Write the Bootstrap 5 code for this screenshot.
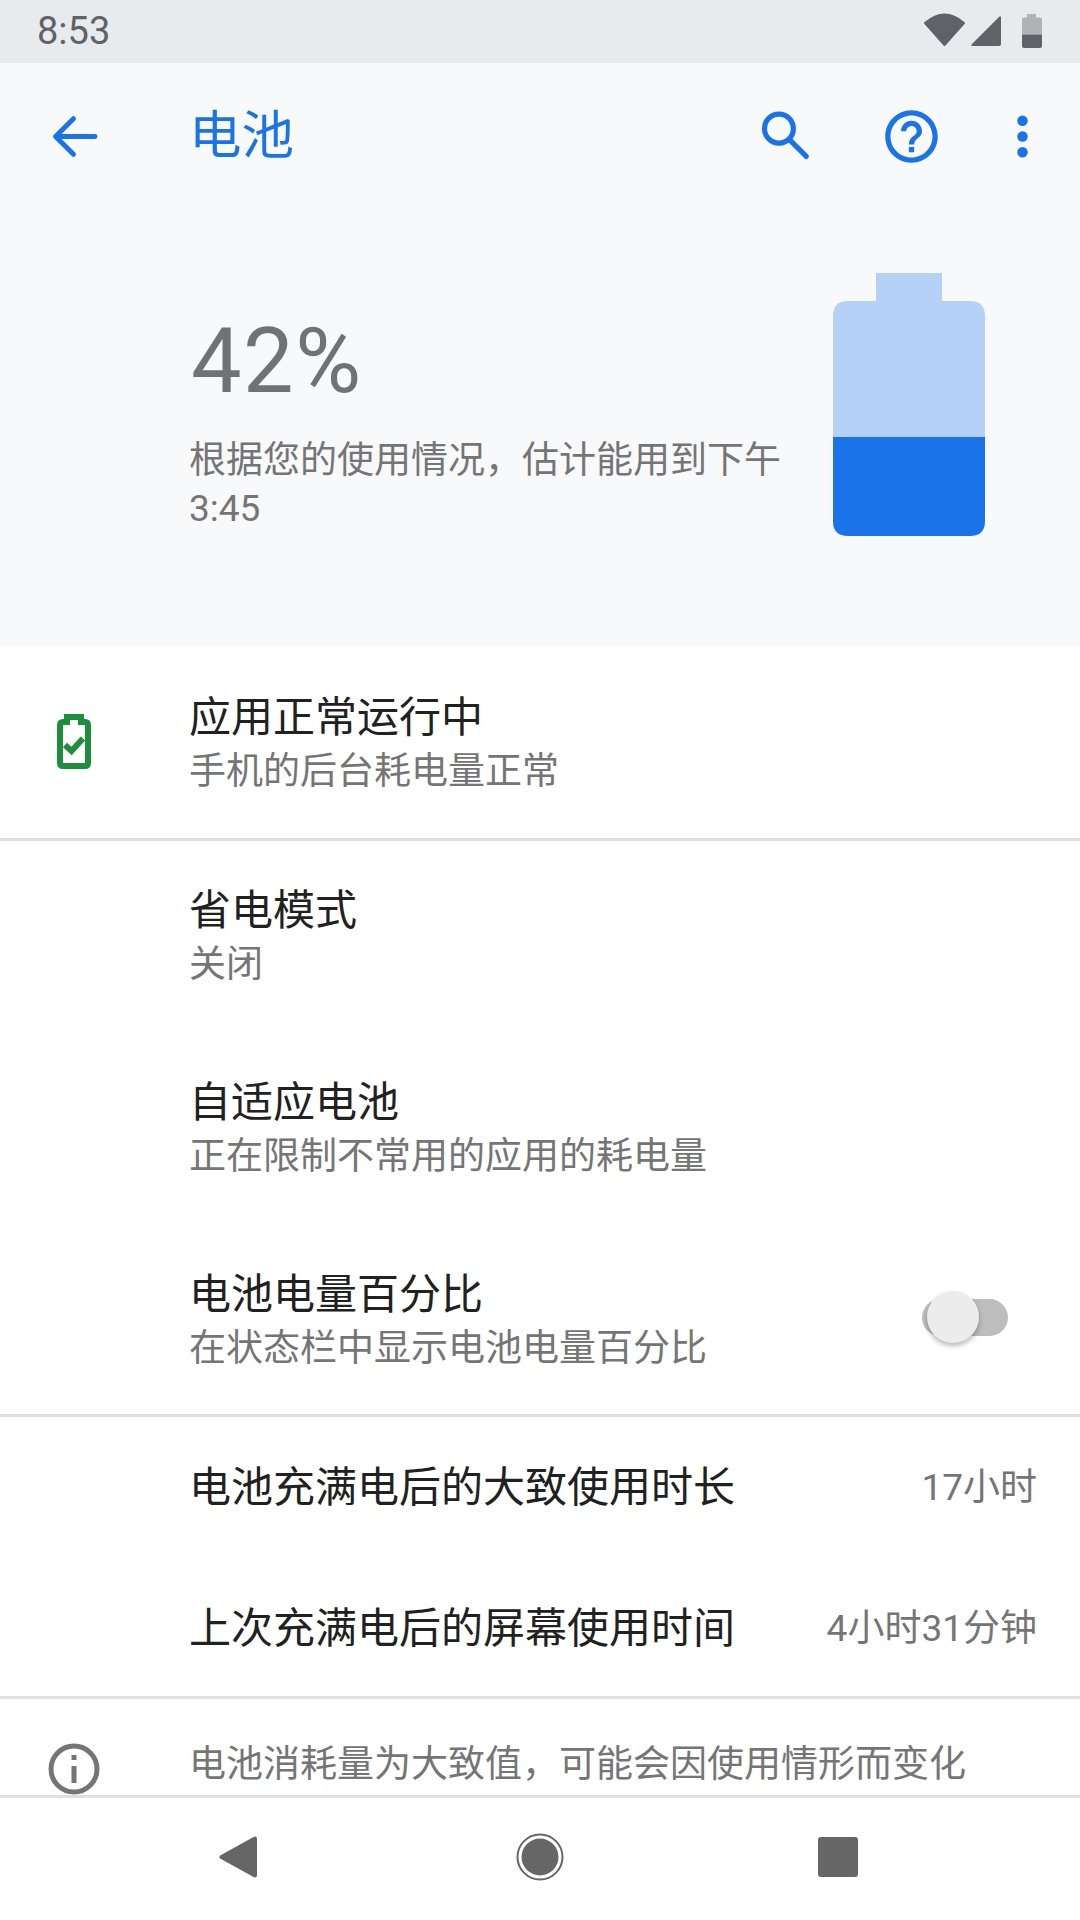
<!DOCTYPE html>
<html lang="zh-CN">
<head>
  <meta charset="UTF-8" />
  <title>电池</title>
  <meta name="viewport" content="width=device-width, initial-scale=1" />
  <link href="https://cdn.jsdelivr.net/npm/bootstrap@5.3.3/dist/css/bootstrap.min.css" rel="stylesheet" />
  <style>
    body { font-family: Roboto, "Noto Sans CJK SC", sans-serif; background: #fff; color: #212121; }
    .phone { width: 1080px; height: 1920px; }
    .status-strip { height: 63px; background: #e8eaed; color: #5f6368; font-size: 38px; padding: 0 38px 0 37px; }
    .status-strip svg { display: block; }
    .status-icons { align-self: flex-start; padding-top: 12px; }
    .top-area { background: #f8f9fa; height: 583px; }
    .app-toolbar { height: 147px; color: #1a73e8; }
    .back-slot { width: 189px; padding-left: 43px; }
    .page-title { font-size: 52.5px; line-height: 1; }
    .action-slot { width: 126px; }
    .action-end { width: 106px; padding-right: 10px; }
    .hero { padding: 0 95px 0 189px; height: 436px; }
    .hero-text { width: 600px; margin-top: 107px; }
    .hero-num { font-size: 90px; line-height: 1; letter-spacing: 1.5px; padding-left: 2px; color: #707275; margin-bottom: 30px; }
    .hero-desc { font-size: 37px; line-height: 48px; color: #757575; }
    .hero-batt { margin-top: 63px; }
    .setting-row { height: 192px; }
    .setting-row.end-row { height: 189px; padding-top: 3px; }
    .setting-row.short { height: 141px; }
    .setting-row.short-end { height: 138px; padding-top: 3px; }
    .row-copy { padding-top: 2px; }
    .first-row .row-copy { padding-top: 6px; }
    .icon-slot { width: 189px; padding-left: 57px; }
    .row-main { font-size: 42px; line-height: 54px; color: #212121; }
    .row-sub { font-size: 37px; line-height: 54px; color: #757575; }
    .row-val { font-size: 37px; color: #757575; padding-right: 43px; }
    .sep { height: 3px; background: #e0e0e0; }
    .list-area { min-height: 0; overflow: hidden; }
    .info-row { padding-top: 42px; color: #757575; font-size: 37px; line-height: 48px; }
    .info-icon { width: 189px; padding-left: 46px; }
    .switch-box { width: 86px; height: 37px; margin: 0 72px 7px 0; }
    .switch-track { height: 37px; background: #bdbdbd; border-radius: 19px; }
    .switch-knob { position: absolute; left: 5px; top: -8px; width: 52px; height: 52px; border-radius: 50%; background: #ececec; box-shadow: 0 3px 5px rgba(0,0,0,.28); }
    .bottom-nav { height: 125px; background: #fff; border-top: 3px solid #e0e0e0; }
  </style>
</head>
<body>
  <div class="phone d-flex flex-column overflow-hidden">
    <div class="status-strip d-flex align-items-center flex-shrink-0">
      <span>8:53</span>
      <div class="status-icons ms-auto d-flex gap-1">
        <svg width="43" height="40" viewBox="0 0 43 40"><path d="M21.5 33 2 11Q21.5-6 41 11Z" fill="#5f6368" stroke="#5f6368" stroke-width="2" stroke-linejoin="round"/></svg>
        <svg width="32" height="40" viewBox="0 0 32 40"><path d="M31 6q0-3-2-1L2 32q-2 2 1 2h26q2 0 2-2Z" fill="#5f6368"/></svg>
        <svg class="ms-3" width="20" height="40" viewBox="0 0 20 40"><path d="M5 2h9v3.5h4q2 0 2 2v15H0v-15q0-2 2-2h3Z" fill="#b1b2b4"/><path d="M0 22.5h20V34q0 2-2 2H2q-2 0-2-2Z" fill="#5f6368"/></svg>
      </div>
    </div>

    <div class="top-area flex-shrink-0">
      <div class="app-toolbar d-flex align-items-center">
        <div class="back-slot">
          <svg class="d-block" width="63" height="63" viewBox="0 0 24 24" fill="none" stroke="#1a73e8" stroke-width="1.9" stroke-linecap="round" stroke-linejoin="round"><path d="M19.8 12H4.8M11.6 5.2 4.8 12l6.8 6.8"/></svg>
        </div>
        <div class="page-title">电池</div>
        <div class="ms-auto d-flex align-items-center">
          <div class="action-slot d-flex justify-content-center">
            <svg width="63" height="63" viewBox="0 0 24 24" fill="none" stroke="#1a73e8" stroke-width="2" stroke-linecap="round"><circle cx="9.5" cy="9" r="5.5"/><path d="M13.7 13.4 19.9 19.6"/></svg>
          </div>
          <div class="action-slot d-flex justify-content-center">
            <svg width="63" height="63" viewBox="0 0 24 24" fill="#1a73e8"><path d="M11 18h2v-2h-2v2zm1-16C6.48 2 2 6.48 2 12s4.48 10 10 10 10-4.48 10-10S17.52 2 12 2zm0 18c-4.41 0-8-3.59-8-8s3.59-8 8-8 8 3.59 8 8-3.59 8-8 8zm0-14c-2.21 0-4 1.79-4 4h2c0-1.1.9-2 2-2s2 .9 2 2c0 2-3 1.75-3 5h2c0-2.25 3-2.5 3-5 0-2.21-1.79-4-4-4z"/></svg>
          </div>
          <div class="action-end d-flex justify-content-center">
            <svg width="63" height="63" viewBox="0 0 24 24" fill="#1a73e8"><circle cx="12" cy="6" r="2"/><circle cx="12" cy="12" r="2"/><circle cx="12" cy="18" r="2"/></svg>
          </div>
        </div>
      </div>
      <div class="hero d-flex justify-content-between align-items-start">
        <div class="hero-text">
          <div class="hero-num">42%</div>
          <div class="hero-desc">根据您的使用情况，估计能用到下午<br />3:45</div>
        </div>
        <svg class="hero-batt" width="152" height="263" viewBox="0 0 152 263">
          <path d="M43 0h66v28h28q15 0 15 15v121H0V43q0-15 15-15h28Z" fill="#b5d1f7"/>
          <path d="M0 164h152v84q0 15-15 15H15q-15 0-15-15Z" fill="#1a73e8"/>
        </svg>
      </div>
    </div>

    <div class="list-area flex-grow-1">
      <div class="setting-row first-row d-flex align-items-center">
        <div class="icon-slot">
          <svg class="d-block" width="34" height="56" viewBox="0 0 34 56" fill="none" stroke="#1e8e3e" stroke-width="6"><path d="M10 8V3h14v5h4q3 0 3 3v38q0 3-3 3H6q-3 0-3-3V11q0-3 3-3Z"/><path d="M8 31l6.5 6L26 24.5"/></svg>
        </div>
        <div class="row-copy"><div class="row-main">应用正常运行中</div><div class="row-sub">手机的后台耗电量正常</div></div>
      </div>
      <div class="sep"></div>
      <div class="setting-row d-flex align-items-center">
        <div class="icon-slot"></div>
        <div class="row-copy"><div class="row-main">省电模式</div><div class="row-sub">关闭</div></div>
      </div>
      <div class="setting-row d-flex align-items-center">
        <div class="icon-slot"></div>
        <div class="row-copy"><div class="row-main">自适应电池</div><div class="row-sub">正在限制不常用的应用的耗电量</div></div>
      </div>
      <div class="setting-row end-row d-flex align-items-center">
        <div class="icon-slot"></div>
        <div class="row-copy"><div class="row-main">电池电量百分比</div><div class="row-sub">在状态栏中显示电池电量百分比</div></div>
        <div class="switch-box position-relative ms-auto">
          <div class="switch-track"></div>
          <div class="switch-knob"></div>
        </div>
      </div>
      <div class="sep"></div>
      <div class="setting-row short d-flex align-items-center">
        <div class="icon-slot"></div>
        <div class="row-main">电池充满电后的大致使用时长</div>
        <div class="row-val ms-auto">17小时</div>
      </div>
      <div class="setting-row short-end d-flex align-items-center">
        <div class="icon-slot"></div>
        <div class="row-main">上次充满电后的屏幕使用时间</div>
        <div class="row-val ms-auto">4小时31分钟</div>
      </div>
      <div class="sep"></div>
      <div class="info-row d-flex">
        <div class="info-icon">
          <svg class="d-block" width="56" height="56" viewBox="0 0 56 56" fill="none" stroke="#757575" stroke-width="5"><circle cx="28" cy="28" r="23"/><path d="M28 25v17M28 14v5"/></svg>
        </div>
        <div>电池消耗量为大致值，可能会因使用情形而变化</div>
      </div>
    </div>

    <div class="bottom-nav d-flex align-items-center flex-shrink-0">
      <svg width="1080" height="122" viewBox="0 0 1080 122" fill="#666">
        <path d="M255 40.5V77.5L221.5 59Z" stroke="#666" stroke-width="4" stroke-linejoin="round"/>
        <circle cx="540" cy="59" r="22.5" fill="none" stroke="#666" stroke-width="2"/>
        <circle cx="540" cy="59" r="18.5"/>
        <rect x="818" y="39" width="40" height="40" rx="3"/>
      </svg>
    </div>
  </div>
  <script src="https://cdn.jsdelivr.net/npm/bootstrap@5.3.3/dist/js/bootstrap.bundle.min.js"></script>
</body>
</html>
